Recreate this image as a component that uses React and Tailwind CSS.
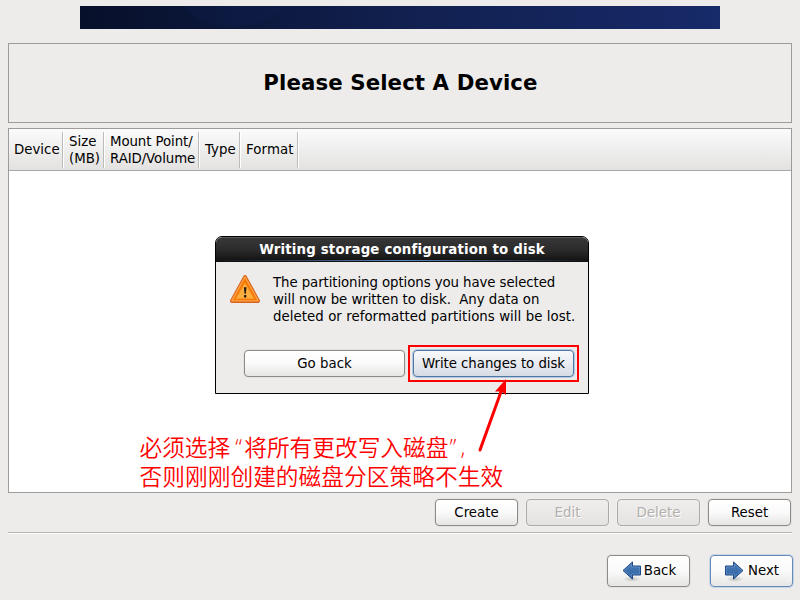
import React from "react";

const buttonBase =
  "flex items-center justify-center rounded-[4px] border whitespace-nowrap bg-linear-to-b";

const variants = {
  normal:
    "border-[#8d8a88] from-white via-[#fafafa] to-[#e6e5e4] text-black shadow-[0_0_0_1px_#e3e2e0]",
  disabled:
    "border-[#adaba9] from-[#efeeed] to-[#e4e3e2] text-[#b2afad] [text-shadow:1px_1px_0_#fff] shadow-[0_0_0_1px_#f1f0ef]",
  primary:
    "border-[#648ab8] from-white via-[#fafafa] to-[#e7e6e5] text-black shadow-[0_0_0_1px_#c9d5e3]",
  active:
    "border-[#4d78a8] from-[#f8f9fa] via-[#e8ebf0] to-[#d5dbe4] text-black shadow-[0_0_0_1px_#b7c9dd]",
};

function Button({ variant = "normal", className = "", children }) {
  return (
    <button className={`${buttonBase} ${variants[variant]} ${className}`}>
      {children}
    </button>
  );
}

function Arrow({ flip }) {
  return (
    <svg width="20" height="22" viewBox="0 0 20 22" className="shrink-0">
      <defs>
        <radialGradient id="arrowShadow">
          <stop offset="0" stopColor="#000" stopOpacity=".2" />
          <stop offset="1" stopColor="#000" stopOpacity="0" />
        </radialGradient>
        <linearGradient id="arrowFill" x1="0" y1="0" x2="0" y2="1">
          <stop offset="0" stopColor="#4a7dba" />
          <stop offset="1" stopColor="#2f62a0" />
        </linearGradient>
      </defs>
      <ellipse cx="10" cy="19" rx="9" ry="3" fill="url(#arrowShadow)" />
      <g transform={flip ? "translate(19 0) scale(-1 1)" : undefined}>
        <path
          d="M1 10.5 L10.5 1.9 V6 H18.5 V15 H10.5 V19.1 Z"
          fill="url(#arrowFill)"
          stroke="#204a87"
          strokeLinejoin="round"
        />
        <path
          d="M2.6 10.5 L9.5 4.3 V7 H17.5 V14 H9.5 V16.7 Z"
          fill="none"
          stroke="#8ab0dc"
          strokeOpacity=".45"
          strokeWidth=".8"
        />
      </g>
    </svg>
  );
}

function WarningIcon() {
  return (
    <svg width="32" height="32" viewBox="0 0 32 32" className="shrink-0">
      <path
        d="M16 4.1 L29 27.9 H3 Z"
        fill="#f57900"
        stroke="#d9641b"
        strokeWidth="4"
        strokeLinejoin="round"
      />
      <path
        d="M16 4.4 L28.7 27.6 H3.3 Z"
        fill="#f57900"
        stroke="#fba24d"
        strokeWidth="2"
        strokeLinejoin="round"
      />
      <path d="M16 5 L28.1 27.2 H3.9 Z" fill="#f57900" />
      <path d="M16 10 L25.1 25.7 H6.9 Z" fill="#fcaf3e" stroke="#f8962a" />
      <path d="M14.9 14.3 H17.5 L16.8 20.8 H15.6 Z" fill="#1c1710" />
      <rect x="15" y="22" width="2.3" height="2.4" rx=".6" fill="#1c1710" />
    </svg>
  );
}

function Column({ className, children }) {
  return (
    <div
      className={`flex h-[36px] shrink-0 items-center border-r border-[#bdbbb9] whitespace-pre shadow-[1px_0_0_#fff] ${className}`}
    >
      {children}
    </div>
  );
}

function Dialog() {
  return (
    <div className="absolute top-[236px] left-[215px] flex h-[158px] w-[374px] flex-col rounded-t-[7px] border border-black bg-[#edeceb]">
      <div className="flex h-[25px] shrink-0 flex-col rounded-t-[6px] border-t border-[#5b5b5b] bg-linear-to-b from-[#373737] via-[#2b2b2b] to-[#101010]">
        <div className="flex h-[22px] items-center justify-center text-[13.33px] leading-[17px] font-bold text-white">
          <span className="tracking-[0.175px]">Writing storage configuration to disk</span>
        </div>
        <div className="h-px bg-linear-to-r from-transparent via-[#5d88c4] to-transparent" />
      </div>
      <div className="flex pt-[11px] pl-[13px]">
        <WarningIcon />
        <div className="ml-3 pt-px whitespace-pre">
          <p className="tracking-[-0.085px]">The partitioning options you have selected</p>
          <p className="tracking-[-0.04px]">{"will now be written to disk.  Any data on"}</p>
          <p className="tracking-[0.055px]">deleted or reformatted partitions will be lost.</p>
        </div>
      </div>
      <div className="mt-[25px] flex gap-2 pl-7">
        <Button className="h-[27px] w-[161px]">Go back</Button>
        <Button variant="active" className="h-[27px] w-[161px]">
          <span className="tracking-[-0.05px]">Write changes to disk</span>
        </Button>
      </div>
    </div>
  );
}

function Annotation() {
  return (
    <>
      <div className="absolute top-[345px] left-[408px] h-[37px] w-[171px] border-2 border-[#fe0000]" />
      <svg
        className="absolute top-[376px] left-[470px]"
        width="50"
        height="80"
        viewBox="470 376 50 80"
      >
        <path d="M480 450 L502 389" stroke="#fe0000" strokeWidth="3" strokeLinecap="round" />
        <path d="M506 379 L506 395 L501.5 391.5 L495 391.5 Z" fill="#fe0000" />
      </svg>
      <div className="absolute top-[432px] left-[139.5px] font-['Noto_Sans_CJK_SC',sans-serif] text-[22.7px] leading-[29px] font-[350] whitespace-pre text-[#fe0000]">
        <div className="flex">
          <span>必须选择</span>
          <span className="w-[14px] pl-[5px] font-['Open_Sans',sans-serif]">“</span>
          <span>将所有更改写入磁盘</span>
          <span className="w-[12px] pl-px font-['Open_Sans',sans-serif]">”</span>
          <span className="font-['Open_Sans',sans-serif]">,</span>
        </div>
        <div className="tracking-[0.04px]">否则刚刚创建的磁盘分区策略不生效</div>
      </div>
    </>
  );
}

export default function App() {
  return (
    <div className="relative flex h-[600px] w-[800px] flex-col overflow-hidden bg-[#edeceb] px-2 pt-1.5 font-['DejaVu_Sans',sans-serif] text-[13.33px] leading-[17px] text-black">
      <div className="mx-[72px] h-[23px] shrink-0 overflow-hidden bg-linear-to-r from-[#07102a] via-[#11204f] to-[#172a69]">
        <svg width="640" height="23">
          <ellipse cx="154" cy="-15" rx="55" ry="36" fill="#12245a" opacity=".2" />
        </svg>
      </div>

      <header className="mt-3.5 flex h-20 shrink-0 items-center justify-center border border-[#9d9c9a]">
        <h1 className="pl-px text-[21.3px] leading-[26px] font-bold tracking-[0.09px]">
          Please Select A Device
        </h1>
      </header>

      <main className="mt-[5px] flex h-[365px] shrink-0 flex-col border border-[#9d9c9a] bg-white">
        <div className="flex h-[42px] items-center border-b border-[#a9a7a5] bg-linear-to-b from-[#fbfbfb] to-[#e3e2e1]">
          <Column className="w-[54px] pl-[5px]">Device</Column>
          <Column className="w-[41px] pl-[6px]">{"Size\n(MB)"}</Column>
          <Column className="w-[95px] pl-[6px] tracking-[-0.08px]">{"Mount Point/\nRAID/Volume"}</Column>
          <Column className="w-[41px] pl-[6px]">Type</Column>
          <Column className="w-[58px] pl-[6px] tracking-[0.1px]">Format</Column>
        </div>
      </main>

      <div className="mt-1.5 flex shrink-0 justify-end gap-2 pr-px">
        <Button className="h-[27px] w-[83px]">Create</Button>
        <Button variant="disabled" className="h-[27px] w-[83px]">Edit</Button>
        <Button variant="disabled" className="h-[27px] w-[83px]">Delete</Button>
        <Button className="h-[27px] w-[83px]">Reset</Button>
      </div>

      <div className="mt-1.5 h-0.5 shrink-0 border-t border-b border-t-[#b5b3b0] border-b-white" />

      <div className="mt-[21px] -mr-px flex shrink-0 justify-end gap-5">
        <Button className="h-8 w-[83px] gap-0.5 pl-px">
          <Arrow />
          <span className="pb-0.5">Back</span>
        </Button>
        <Button variant="primary" className="h-8 w-[83px] gap-[3px] pl-px">
          <Arrow flip />
          <span className="pb-0.5">Next</span>
        </Button>
      </div>

      <Dialog />
      <Annotation />
    </div>
  );
}
